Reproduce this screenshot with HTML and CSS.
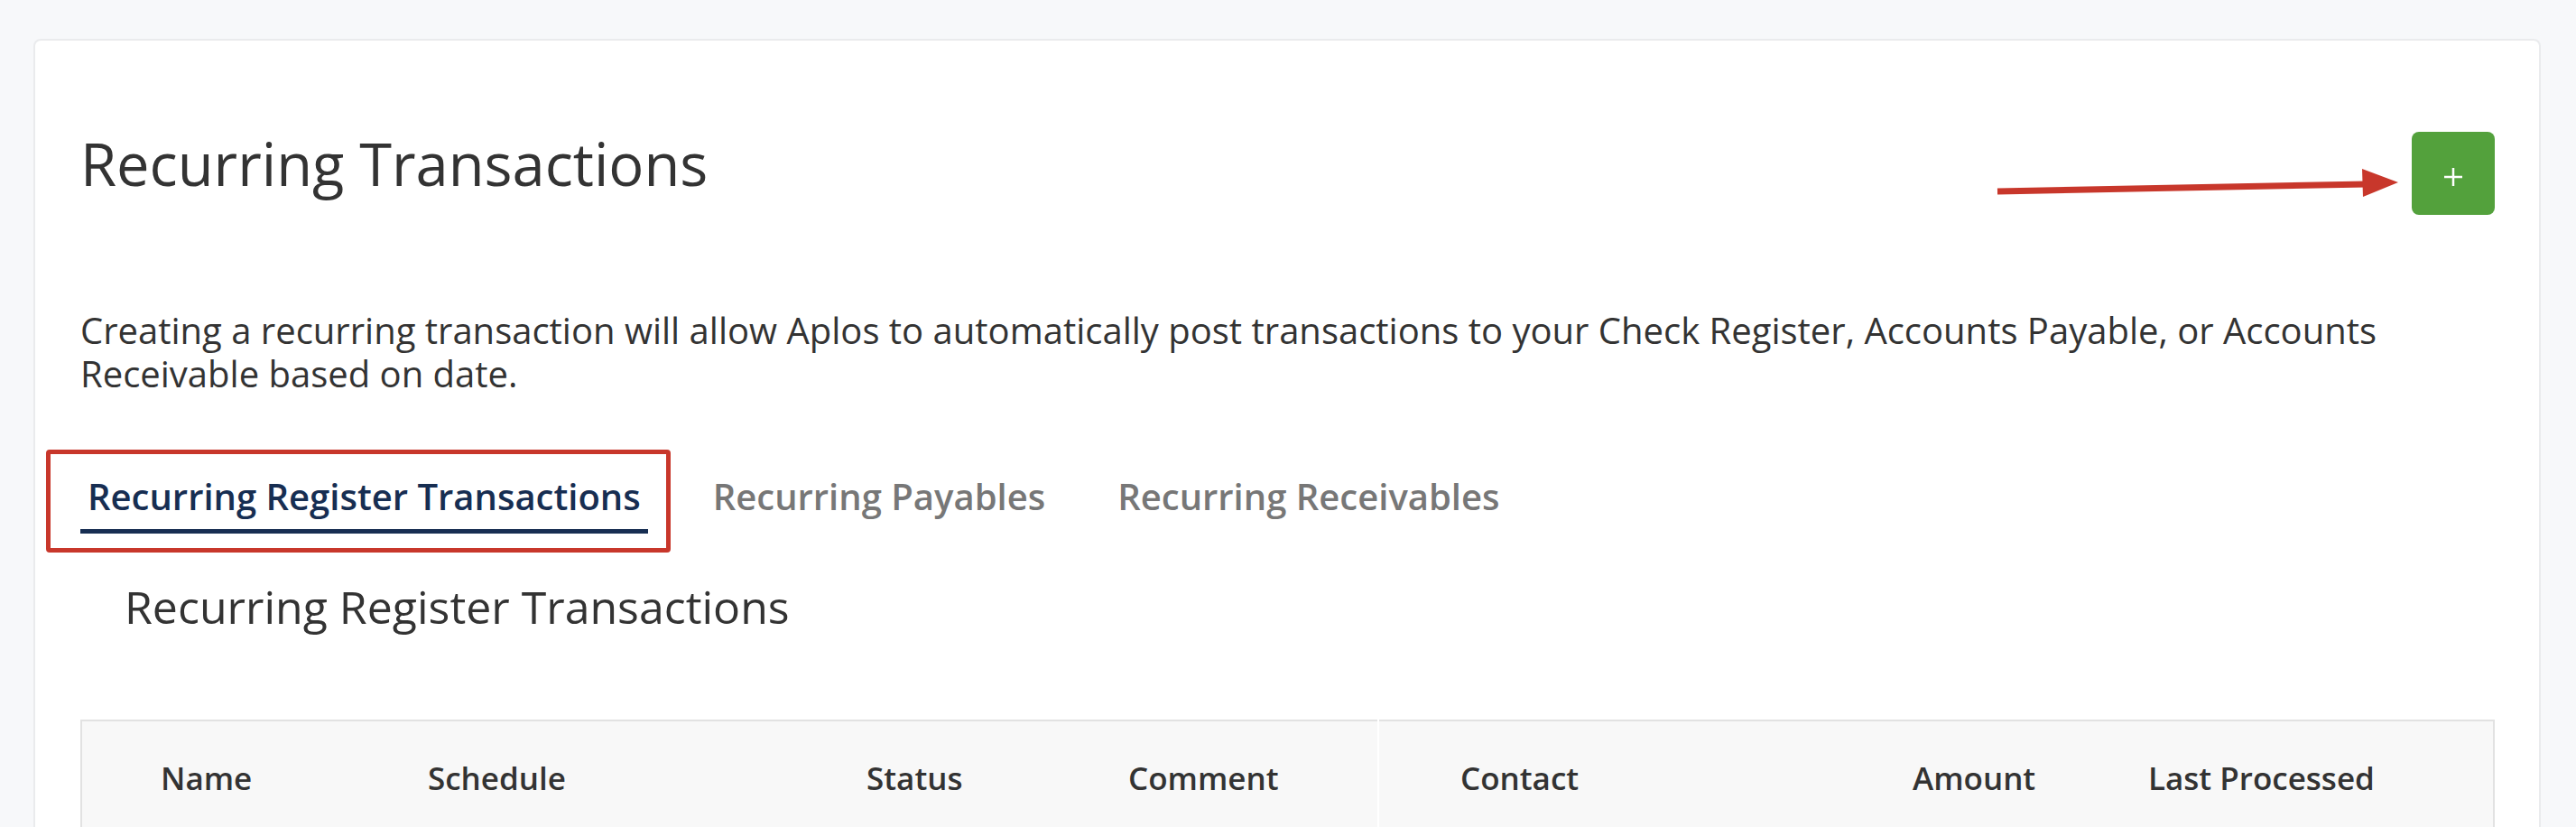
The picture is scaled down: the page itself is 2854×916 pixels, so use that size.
FILE: index.html
```html
<!DOCTYPE html>
<html lang="en">
<head>
  <meta charset="UTF-8" />
  <title>Recurring Transactions</title>
  <link rel="stylesheet" href="styles.css">
</head>
<body>

  <div class="page">
    <div class="card">

      <!-- Header: title + add button -->
      <div class="header">
        <h1>Recurring Transactions</h1>
        <button class="add-button" title="Add">
          <svg width="20" height="20" viewBox="0 0 20 20"><path d="M10 0v20M0 10h20" stroke="#fff" stroke-width="2.5"/></svg>
        </button>
      </div>

      <!-- annotation arrow pointing at the button -->
      <svg class="arrow" width="465" height="45" viewBox="0 0 465 45">
        <line x1="13" y1="32" x2="422" y2="24" stroke="#c8372b" stroke-width="7"/>
        <polygon points="417,7 457,22 418,38" fill="#c8372b"/>
      </svg>

      <p class="intro">
        Creating a recurring transaction will allow Aplos to automatically post transactions to your Check Register, Accounts Payable, or Accounts Receivable based on date.
      </p>

      <div class="tabs">
        <a class="tab active">Recurring Register Transactions</a>
        <a class="tab">Recurring Payables</a>
        <a class="tab">Recurring Receivables</a>
        <div class="highlight"></div>
      </div>

      <h2>Recurring Register Transactions</h2>

      <table class="list">
        <thead>
          <tr>
            <th class="col-name">Name</th>
            <th class="col-schedule">Schedule</th>
            <th class="col-status">Status</th>
            <th class="col-comment">Comment</th>
            <th class="col-contact">Contact</th>
            <th class="col-amount">Amount</th>
            <th class="col-last">Last Processed</th>
          </tr>
        </thead>
      </table>

    </div>
  </div>

</body>
</html>
```

FILE: styles.css
```css
body {
  margin: 0;
  background-color: #f7f8fa;
  color: #333;
  font-family: 'Open Sans', 'Noto Sans', sans-serif;
}

.page {
  padding: 43px 39px 0 37px;
}

.card {
  position: relative;
  background: #fff;
  border: 2px solid #eaebed;
  border-bottom: none;
  border-radius: 8px 8px 0 0;
  padding: 0 49px 60px 50px;
}

.header {
  display: flex;
  justify-content: space-between;
  align-items: flex-start;
  padding-top: 97px;
}

h1 {
  margin: 0;
  font-size: 65px;
  font-weight: 400;
  line-height: 1.2;
  color: #333;
}

.add-button {
  margin-top: 4px;
  width: 92px;
  height: 92px;
  display: flex;
  align-items: center;
  justify-content: center;
  padding: 0;
  padding-top: 8px;
  background-color: #53a13c;
  border: none;
  border-radius: 8px;
  cursor: pointer;
}

.arrow {
  position: absolute;
  left: 2161px;
  top: 135px;
}

.intro {
  margin: 104px 0 0;
  font-size: 40px;
  line-height: 48px;
}

.tabs {
  position: relative;
  display: flex;
  gap: 64px;
  margin-top: 86px;
}

.tab {
  padding: 0 8px 10px;
  font-size: 40px;
  font-weight: 600;
  line-height: 1.3;
  color: #777;
  border-bottom: 5px solid transparent;
  cursor: pointer;
}

.tab.active {
  color: #172e52;
  border-bottom-color: #172e52;
}

.highlight {
  position: absolute;
  left: -38px;
  top: -26px;
  width: 692px;
  height: 114px;
  box-sizing: border-box;
  border: 5px solid #c8372b;
  border-radius: 4px;
}

h2 {
  margin: 51px 0 0 49px;
  font-size: 50px;
  font-weight: 400;
  line-height: 1.2;
}

.list {
  width: 100%;
  margin-top: 95px;
  border-collapse: collapse;
  table-layout: fixed;
  border: 2px solid #e2e2e2;
}

.list th {
  padding: 38px 0 40px;
  background: #f8f8f8;
  font-size: 35px;
  font-weight: 600;
  line-height: 1.4;
  text-align: left;
  color: #333;
}

.col-name { width: 296px; padding-left: 87px !important; }
.col-schedule { width: 486px; }
.col-status { width: 290px; }
.col-comment { width: 276px; }
.col-contact { width: 501px; padding-left: 90px !important; border-left: 2px solid #fff; }
.col-amount { width: 261px; }
```
